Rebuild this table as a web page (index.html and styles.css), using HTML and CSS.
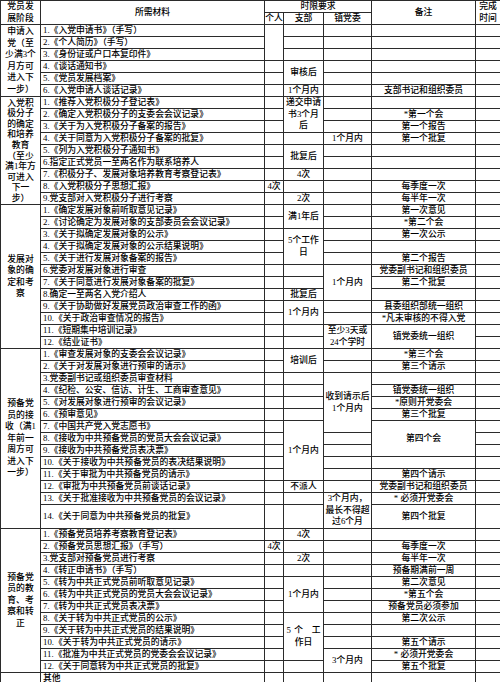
FILE: index.html
```html
<!DOCTYPE html>
<html lang="zh-CN">
<head>
<meta charset="utf-8">
<title>党员发展阶段所需材料</title>
<link rel="stylesheet" href="styles.css">
</head>
<body>
<table class="sheet">
<colgroup>
<col class="w1"><col class="w2"><col class="w3"><col class="w4"><col class="w5"><col class="w6"><col class="w7">
</colgroup>
<tr class="hd">
<td rowspan="2" class="stage">党员发<br>展阶段</td>
<td rowspan="2">所需材料</td>
<td colspan="3">时限要求</td>
<td rowspan="2">备注</td>
<td rowspan="2" class="stage">完成<br>时间</td>
</tr>
<tr class="hd"><td>个人</td><td>支部</td><td>镇党委</td></tr>

<!-- 申请入党 -->
<tr>
<td rowspan="6" class="stage">申请入<br>党（至<br>少满3个<br>月方可<br>进入下<br>一步）</td>
<td class="m">1.《入党申请书》（手写）</td><td rowspan="3"></td><td></td><td></td><td></td><td></td>
</tr>
<tr><td class="m">2.《个人简历》（手写）</td><td></td><td></td><td></td><td></td></tr>
<tr><td class="m">3.《身份证或户口本复印件》</td><td></td><td></td><td></td><td></td></tr>
<tr><td class="m">4.《谈话通知书》</td><td></td><td rowspan="2">审核后</td><td></td><td></td><td></td></tr>
<tr><td class="m">5.《党员发展档案》</td><td></td><td></td><td></td><td></td></tr>
<tr><td class="m">6.《入党申请人谈话记录》</td><td></td><td>1个月内</td><td></td><td>支部书记和组织委员</td><td></td></tr>

<!-- 入党积极分子 -->
<tr>
<td rowspan="9" class="stage tight">入党积<br>极分子<br>的确定<br>和培养<br>教育<br>（至少<br>满1年方<br>可进入<br>下一<br>步）</td>
<td class="m">1.《推荐入党积极分子登记表》</td><td></td><td rowspan="3" class="ml">递交申请<br>书3个月<br>后</td><td></td><td></td><td></td>
</tr>
<tr><td class="m">2.《确定入党积极分子的支委会会议记录》</td><td></td><td></td><td>*第一个会</td><td></td></tr>
<tr><td class="m">3.《关于为入党积极分子备案的报告》</td><td></td><td></td><td>第一个报告</td><td></td></tr>
<tr><td class="m">4.《关于同意为入党积极分子备案的批复》</td><td></td><td></td><td>1个月内</td><td>第一个批复</td><td></td></tr>
<tr><td class="m">5.《列为入党积极分子通知书》</td><td></td><td rowspan="2">批复后</td><td></td><td></td><td></td></tr>
<tr><td class="m">6.指定正式党员一至两名作为联系培养人</td><td></td><td></td><td></td><td></td></tr>
<tr><td class="m">7.《积极分子、发展对象培养教育考察登记表》</td><td></td><td>4次</td><td></td><td></td><td></td></tr>
<tr><td class="m">8.《入党积极分子思想汇报》</td><td>4次</td><td></td><td></td><td>每季度一次</td><td></td></tr>
<tr><td class="m">9.党支部对入党积极分子进行考察</td><td></td><td>2次</td><td></td><td>每半年一次</td><td></td></tr>

<!-- 发展对象 -->
<tr>
<td rowspan="12" class="stage">发展对<br>象的确<br>定和考<br>察</td>
<td class="m">1.《确定发展对象前听取意见记录》</td><td></td><td rowspan="2">满1年后</td><td></td><td>第一次意见</td><td></td>
</tr>
<tr><td class="m">2.《讨论确定为发展对象的支部委员会会议记录》</td><td></td><td></td><td>*第二个会</td><td></td></tr>
<tr><td class="m">3.《关于拟确定发展对象的公示》</td><td></td><td rowspan="3" class="ml">5个工作<br>日</td><td></td><td>第一次公示</td><td></td></tr>
<tr><td class="m">4.《关于拟确定发展对象的公示结果说明》</td><td></td><td></td><td></td><td></td></tr>
<tr><td class="m">5.《关于进行发展对象备案的报告》</td><td></td><td></td><td>第二个报告</td><td></td></tr>
<tr><td class="m">6.党委对发展对象进行审查</td><td></td><td></td><td rowspan="3">1个月内</td><td>党委副书记和组织委员</td><td></td></tr>
<tr><td class="m">7.《关于同意进行发展对象备案的批复》</td><td></td><td></td><td>第二个批复</td><td></td></tr>
<tr><td class="m">8.确定一至两名入党介绍人</td><td></td><td>批复后</td><td></td><td></td></tr>
<tr><td class="m">9.《关于协助做好发展党员政治审查工作的函》</td><td></td><td rowspan="2">1个月内</td><td></td><td>县委组织部统一组织</td><td></td></tr>
<tr><td class="m">10.《关于政治审查情况的报告》</td><td></td><td></td><td>*凡未审核的不得入党</td><td></td></tr>
<tr><td class="m">11.《短期集中培训记录》</td><td></td><td></td><td rowspan="2" class="ml">至少3天或<br>24个学时</td><td rowspan="2">镇党委统一组织</td><td></td></tr>
<tr><td class="m">12.《结业证书》</td><td></td><td></td><td></td></tr>

<!-- 预备党员的接收 -->
<tr>
<td rowspan="14" class="stage">预备党<br>员的接<br>收（满1<br>年前一<br>周方可<br>进入下<br>一步）</td>
<td class="m">1.《审查发展对象的支委会会议记录》</td><td></td><td rowspan="2">培训后</td><td></td><td>*第三个会</td><td></td>
</tr>
<tr><td class="m">2.《关于对发展对象进行预审的请示》</td><td></td><td></td><td>第三个请示</td><td></td></tr>
<tr><td class="m">3.党委副书记或组织委员审查材料</td><td></td><td></td><td rowspan="5" class="ml">收到请示后<br>1个月内</td><td></td><td></td></tr>
<tr><td class="m">4.《纪检、公安、信访、计生、工商审查意见》</td><td></td><td></td><td>镇党委统一组织</td><td></td></tr>
<tr><td class="m">5.《对发展对象进行预审的会议记录》</td><td></td><td></td><td>*原则开党委会</td><td></td></tr>
<tr><td class="m">6.《预审意见》</td><td></td><td></td><td>第三个批复</td><td></td></tr>
<tr><td class="m">7.《中国共产党入党志愿书》</td><td></td><td rowspan="5">1个月内</td><td rowspan="3">第四个会</td><td></td></tr>
<tr><td class="m">8.《接收为中共预备党员的党员大会会议记录》</td><td></td><td></td><td></td></tr>
<tr><td class="m">9.《接收为中共预备党员表决票》</td><td></td><td></td><td></td></tr>
<tr><td class="m">10.《关于接收为中共预备党员的表决结果说明》</td><td></td><td></td><td></td><td></td></tr>
<tr><td class="m">11.《关于审批为中共预备党员的请示》</td><td></td><td></td><td>第四个请示</td><td></td></tr>
<tr><td class="m">12.《审批为中共预备党员前谈话记录》</td><td></td><td>不派人</td><td></td><td>党委副书记和组织委员</td><td></td></tr>
<tr><td class="m">13.《关于批准接收为中共预备党员的会议记录》</td><td></td><td></td><td rowspan="2" class="ml">3个月内，<br>最长不得超<br>过6个月</td><td>* 必须开党委会</td><td></td></tr>
<tr class="tall"><td class="m">14.《关于同意为中共预备党员的批复》</td><td></td><td></td><td>第四个批复</td><td></td></tr>

<!-- 预备党员的教育、考察和转正 -->
<tr>
<td rowspan="12" class="stage">预备党<br>员的教<br>育、考<br>察和转<br>正</td>
<td class="m">1.《预备党员培养考察教育登记表》</td><td></td><td>4次</td><td></td><td></td><td></td>
</tr>
<tr><td class="m">2.《预备党员思想汇报》（手写）</td><td>4次</td><td></td><td></td><td>每季度一次</td><td></td></tr>
<tr><td class="m">3.党支部对预备党员进行考察</td><td></td><td>2次</td><td></td><td>每半年一次</td><td></td></tr>
<tr><td class="m">4.《转正申请书》（手写）</td><td></td><td></td><td></td><td>预备期满前一周</td><td></td></tr>
<tr><td class="m">5.《转为中共正式党员前听取意见记录》</td><td></td><td rowspan="3">1个月内</td><td></td><td>第二次意见</td><td></td></tr>
<tr><td class="m">6.《转为中共正式党员的党员大会会议记录》</td><td></td><td></td><td>*第五个会</td><td></td></tr>
<tr><td class="m">7.《转为中共正式党员表决票》</td><td></td><td></td><td>预备党员必须参加</td><td></td></tr>
<tr><td class="m">8.《关于转为中共正式党员的公示》</td><td></td><td rowspan="4" class="ml"><span class="just">5个 工</span><br>作日</td><td></td><td>第二次公示</td><td></td></tr>
<tr><td class="m">9.《关于转为中共正式党员的结果说明》</td><td></td><td></td><td></td><td></td></tr>
<tr><td class="m">10.《关于转为中共正式党员的请示》</td><td></td><td></td><td>第五个请示</td><td></td></tr>
<tr><td class="m">11.《批准为中共正式党员的党委会会议记录》</td><td></td><td rowspan="2">3个月内</td><td>* 必须开党委会</td><td></td></tr>
<tr><td class="m">12.《关于同意转为中共正式党员的批复》</td><td></td><td></td><td>第五个批复</td><td></td></tr>

<tr><td></td><td class="m">其他</td><td></td><td></td><td></td><td></td><td></td></tr>
</table>
</body>
</html>
```

FILE: styles.css
```css
body {
  margin: 0;
  background: #ffffff;
}

.sheet {
  width: 500px;
  table-layout: fixed;
  border-collapse: collapse;
  font-family: "Liberation Serif", "Noto Sans CJK SC", serif;
  font-size: 8.8px;
  font-weight: 500;
  color: #000000;
}

.w1 { width: 40px; }
.w2 { width: 224px; }
.w3 { width: 19px; }
.w4 { width: 40px; }
.w5 { width: 48px; }
.w6 { width: 104px; }
.w7 { width: 25px; }

.sheet tr {
  height: 12px;
}

.sheet tr.hd {
  height: 11px;
}

.sheet tr.tall {
  height: 24px;
}

.sheet td {
  border: 1px solid #2b2b2b;
  padding: 0;
  line-height: 11px;
  text-align: center;
  vertical-align: middle;
  white-space: nowrap;
  overflow: hidden;
}

.sheet td.m {
  text-align: left;
  padding-left: 2px;
}

.sheet td.stage {
  line-height: 11.5px;
}

.sheet td.tight {
  line-height: 10.6px;
}

.sheet td.ml {
  line-height: 11.5px;
}

.just {
  display: inline-block;
  width: 34px;
  text-align: justify;
  text-align-last: justify;
}
```
